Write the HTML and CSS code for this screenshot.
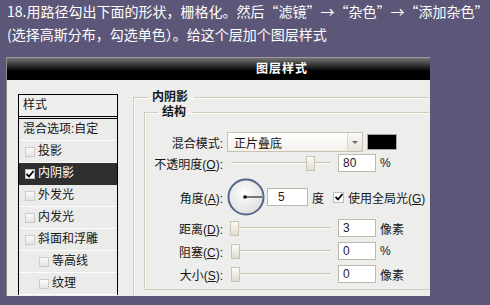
FILE: index.html
```html
<!DOCTYPE html>
<html lang="zh-CN">
<head>
  <meta charset="UTF-8" />
  <title>图层样式</title>
  <link rel="stylesheet" href="styles.css">
</head>
<body>
  <p class="intro">18.用路径勾出下面的形状，栅格化。然后“滤镜”→“杂色”→“添加杂色”<br>(选择高斯分布，勾选单色）。给这个层加个图层样式</p>

  <div class="dialog">
    <div class="titlebar">图层样式</div>
    <div class="dialog-body">
      <!-- style list -->
      <ul class="style-list">
        <li class="list-head">样式</li>
        <li class="plain">混合选项:自定</li>
        <li><span class="cb"></span>投影</li>
        <li class="selected"><span class="cb on"><svg width="8" height="8" viewBox="0 0 8 8"><path d="M0.5 4 L3 6.5 L7.5 1" fill="none" stroke="#000" stroke-width="1.8"/></svg></span>内阴影</li>
        <li><span class="cb"></span>外发光</li>
        <li><span class="cb"></span>内发光</li>
        <li><span class="cb"></span>斜面和浮雕</li>
        <li class="sub"><span class="cb"></span>等高线</li>
        <li class="sub"><span class="cb"></span>纹理</li>
      </ul>

      <fieldset class="group outer">
        <legend>内阴影</legend>
        <fieldset class="group inner">
          <legend>结构</legend>

          <div class="row row-blend">
            <span class="lbl">混合模式:</span>
            <div class="select"><span class="select-text">正片叠底</span><span class="select-btn"><i></i></span></div>
            <span class="swatch"></span>
          </div>

          <div class="row row-opacity">
            <span class="lbl">不透明度(<u>O</u>):</span>
            <div class="slider"><span class="thumb" style="left: 75px"></span></div>
            <span class="num">80</span>
            <span class="unit">%</span>
          </div>

          <div class="row row-angle">
            <span class="lbl">角度(<u>A</u>):</span>
            <svg class="dial" width="38" height="38" viewBox="0 0 38 38">
              <defs>
                <radialGradient id="dialFill" cx="45%" cy="40%" r="65%">
                  <stop offset="0" stop-color="#ffffff"/>
                  <stop offset="1" stop-color="#dcdcdc"/>
                </radialGradient>
              </defs>
              <circle cx="19" cy="19" r="17.5" fill="url(#dialFill)" stroke="#55648c" stroke-width="2"/>
              <line x1="18" y1="19" x2="35" y2="19" stroke="#000" stroke-width="1"/>
              <rect x="16.5" y="17.5" width="3" height="3" fill="#000"/>
            </svg>
            <span class="num wide">5</span>
            <span class="unit">度</span>
            <span class="cb on global"><svg width="8" height="8" viewBox="0 0 8 8"><path d="M0.5 4 L3 6.5 L7.5 1" fill="none" stroke="#000" stroke-width="1.8"/></svg></span>
            <span class="check-label">使用全局光(<u>G</u>)</span>
          </div>

          <div class="row row-distance">
            <span class="lbl">距离(<u>D</u>):</span>
            <div class="slider"><span class="thumb" style="left: -1px"></span></div>
            <span class="num">3</span>
            <span class="unit">像素</span>
          </div>

          <div class="row row-choke">
            <span class="lbl">阻塞(<u>C</u>):</span>
            <div class="slider"><span class="thumb" style="left: 0px"></span></div>
            <span class="num">0</span>
            <span class="unit">%</span>
          </div>

          <div class="row row-size">
            <span class="lbl">大小(<u>S</u>):</span>
            <div class="slider"><span class="thumb" style="left: 0px"></span></div>
            <span class="num">0</span>
            <span class="unit">像素</span>
          </div>
        </fieldset>
      </fieldset>
    </div>
  </div>
</body>
</html>
```

FILE: styles.css
```css
body { margin: 0; padding: 0 0 0 7px; background: #5c5778; font-family: "Liberation Sans", "Noto Sans CJK SC", sans-serif; overflow: hidden; }
.intro { margin: 0; color: #fff; font-family: "Noto Sans CJK SC", sans-serif; font-size: 14px; line-height: 23px; white-space: nowrap; }

.dialog { margin: 11px 0 0 -1px; width: 424px; height: 239px; box-sizing: border-box; border-left: 1px solid #8a8a8a; border-top: 1px solid #9a9a9a; background: #ededeb; overflow: hidden; font-size: 12px; color: #161616; }
.titlebar { height: 22px; line-height: 22px; padding-left: 249px; background: linear-gradient(#727272, #262626 40%, #000 60%); color: #fff; font-weight: bold; letter-spacing: 1px; }
.dialog-body { display: flex; align-items: flex-start; padding: 9px 0 0 11px; }

/* left list */
.style-list { list-style: none; margin: 5px 0 0 0; padding: 0; width: 100px; box-sizing: border-box; border: 1px solid #000; border-bottom: none; background: #ebebea; flex: none; }
.style-list li { display: flex; align-items: center; height: 21px; line-height: 21px; border-bottom: 1px solid #fbfbfb; white-space: nowrap; }
.style-list .list-head { padding-left: 4px; border-bottom: 3px double #000; background: #efefee; }
.style-list .plain { padding-left: 4px; }
.style-list .selected { background: #2f2f2f; color: #fff; border-bottom-color: #2f2f2f; }
.style-list .sub .cb { margin-left: 20px; }

.cb { display: inline-flex; align-items: center; justify-content: center; width: 8px; height: 8px; border: 1px solid #cbcbcb; background: linear-gradient(#fbfbfb, #e4e4e4); margin: 0 3px 0 6px; flex: none; }
.cb.on { background: #fff; border-color: #bcbcbc; }

/* group boxes */
.group { margin: 0; padding: 0; border: 1px solid #d2cbbb; border-right: none; box-shadow: inset 1px 1px 0 #fafaf7; min-width: 0; }
.group legend { padding: 0 6px 0 4px; font-weight: bold; }
.outer { margin-left: 15px; width: 296px; height: 230px; border-bottom: none; flex: none; }
.outer > legend { margin-left: 14px; line-height: 16px; }
.inner { margin-left: 10px; width: 285px; padding: 13px 0 6px 0; }
.inner > legend { margin-left: 13px; line-height: 14px; }

/* rows */
.row { display: flex; align-items: center; height: 18px; white-space: nowrap; }
.lbl { width: 78px; text-align: right; margin-right: 4px; flex: none; }
.row-blend { height: 20px; }
.row-opacity { margin-top: 2px; }
.row-angle { height: 38px; margin-top: 6px; }
.row-distance { margin-top: 3px; }
.row-choke, .row-size { margin-top: 5px; }

.select { display: flex; align-items: center; width: 136px; height: 20px; box-sizing: border-box; border: 1px solid #c9c2b1; background: linear-gradient(#fff, #f3f1ec); }
.select-text { flex: 1; padding-left: 6px; }
.select-btn { display: flex; align-items: center; justify-content: center; width: 14px; height: 18px; border-left: 1px solid #ddd7ca; background: linear-gradient(#fbfaf7, #e8e4da); }
.select-btn i { width: 0; height: 0; border-left: 3px solid transparent; border-right: 3px solid transparent; border-top: 3px solid #666; }
.swatch { width: 30px; height: 16px; box-sizing: border-box; margin-left: 4px; background: #000; border: 1px solid #a5a5a5; }

.slider { position: relative; width: 99px; height: 14px; margin-left: 4px; flex: none; }
.slider::before { content: ""; position: absolute; left: 0; right: 0; top: 6px; height: 2px; border-top: 1px solid #cdc6b5; background: #f6f4ef; }
.thumb { position: absolute; top: 0; width: 7px; height: 13px; border: 1px solid #cbc3b1; background: linear-gradient(#fbfaf6, #e2ddd0); }

.num { width: 38px; height: 18px; box-sizing: border-box; margin-left: 8px; padding-left: 4px; border: 1px solid #bdb8ac; background: #fff; line-height: 16px; color: #2c1838; flex: none; }
.num.wide { width: 41px; margin-left: 2px; padding-left: 10px; color: #3a1020; }
.unit { margin-left: 4px; }
.dial { flex: none; }
.cb.global { margin: 0 4px 0 9px; width: 9px; height: 9px; }
```
